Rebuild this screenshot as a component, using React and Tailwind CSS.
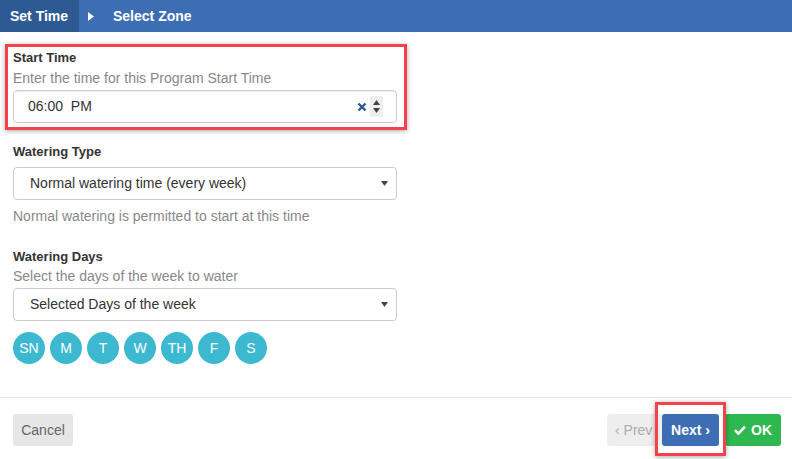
import React from 'react';

const days = ['SN', 'M', 'T', 'W', 'TH', 'F', 'S'];

function Caret() {
  return (
    <svg width="7" height="5" viewBox="0 0 7 5" className="text-[#444]">
      <path d="M0 0h7L3.5 5z" fill="currentColor" />
    </svg>
  );
}

export default function App() {
  return (
    <div className="relative w-[792px] h-[459px] bg-white text-[14px] text-[#333] overflow-hidden" style={{ fontFamily: '"Liberation Sans", Arial, sans-serif' }}>
      {/* wizard steps */}
      <div className="flex items-center h-8 bg-[#3d6eb4] text-white font-bold text-[14px]">
        <div className="flex items-center h-full w-[79px] pl-[10px] bg-[#2e5a94]">Set Time</div>
        <svg width="6" height="9" viewBox="0 0 6 9" className="ml-[9px]">
          <path d="M0 0l6 4.5L0 9z" fill="white" />
        </svg>
        <div className="ml-[19px]">Select Zone</div>
      </div>

      <div className="w-[397px] pl-[13px] pt-[17px]">
        {/* start time */}
        <div className="font-bold text-[13px] leading-[18px]">Start Time</div>
        <div className="text-[#888] leading-5 mt-[1px]">Enter the time for this Program Start Time</div>
        <div className="flex items-center h-[33px] mt-[2px] border border-[#ccc] rounded-[4px] shadow-[inset_0_1px_1px_rgba(0,0,0,0.075)] pl-[14px] pr-[13px]">
          <span className="flex-1 text-[#333]">06:00&nbsp;&nbsp;PM</span>
          <svg width="10" height="10" viewBox="0 0 10 10">
            <path d="M1.5 1.5l7 7M8.5 1.5l-7 7" stroke="#2e5a94" strokeWidth="2.4" />
          </svg>
          <div className="ml-[3px] w-[13px] h-[21px] bg-[#eee] flex flex-col items-center justify-center gap-[3px]">
            <svg width="7" height="5" viewBox="0 0 7 5"><path d="M0 5h7L3.5 0z" fill="#444" /></svg>
            <svg width="7" height="5" viewBox="0 0 7 5"><path d="M0 0h7L3.5 5z" fill="#444" /></svg>
          </div>
        </div>

        {/* watering type */}
        <div className="font-bold text-[13px] leading-[18px] mt-[20px]">Watering Type</div>
        <div className="flex items-center h-[33px] mt-[6px] border border-[#ccc] rounded-[4px] pl-[16px] pr-[8px]">
          <span className="flex-1">Normal watering time (every week)</span>
          <Caret />
        </div>
        <div className="text-[#888] leading-5 mt-[6px]">Normal watering is permitted to start at this time</div>

        {/* watering days */}
        <div className="font-bold text-[13px] leading-[18px] mt-[22px]">Watering Days</div>
        <div className="text-[#888] leading-5">Select the days of the week to water</div>
        <div className="flex items-center h-[33px] mt-[2px] border border-[#ccc] rounded-[4px] pl-[16px] pr-[8px]">
          <span className="flex-1">Selected Days of the week</span>
          <Caret />
        </div>
        <div className="flex gap-[5px] mt-[11px]">
          {days.map((d) => (
            <div key={d} className="w-8 h-8 rounded-full bg-[#3db8d1] text-white flex items-center justify-center text-[14px]">
              {d}
            </div>
          ))}
        </div>
      </div>

      {/* footer */}
      <div className="absolute left-0 right-0 top-[397px] border-t border-[#e5e5e5] flex items-start justify-between px-[13px] pt-[16px] pr-[11px]">
        <button className="w-[60px] h-[32px] rounded-[3px] bg-[#e6e6e6] text-[#666] text-[14px]">Cancel</button>
        <div className="flex">
          <button className="w-[55px] h-[32px] rounded-l-[3px] bg-[#eee] text-[#aaa] text-[14px] text-left pl-[8px] overflow-hidden">‹ Prev</button>
          <button className="w-[57px] h-[32px] rounded-[3px] bg-[#3d6eb4] text-white font-bold text-[14px]">Next ›</button>
          <button className="ml-[6px] w-[56px] h-[32px] rounded-[3px] bg-[#2fb84f] text-white font-bold text-[14px] flex items-center justify-center gap-[5px]">
            <svg width="12" height="10" viewBox="0 0 12 10">
              <path d="M1 5.2l3.4 3.4L11 1.6" stroke="white" strokeWidth="2.6" fill="none" />
            </svg>
            OK
          </button>
        </div>
      </div>

      {/* highlight boxes */}
      <div className="absolute left-[5px] top-[44px] w-[402px] h-[86px] border-[3px] border-[#f2434c] shadow-[0_1px_5px_rgba(0,0,0,0.35)] pointer-events-none" />
      <div className="absolute left-[655px] top-[402px] w-[71px] h-[54px] border-[3px] border-[#f2434c] shadow-[0_1px_5px_rgba(0,0,0,0.35)] pointer-events-none" />
    </div>
  );
}
